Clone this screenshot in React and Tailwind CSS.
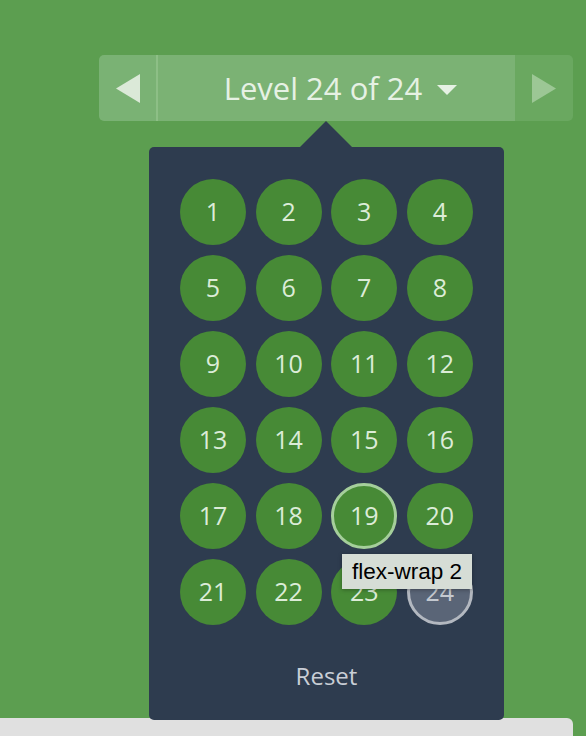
export default function App() {
  const nums = Array.from({ length: 24 }, (_, i) => i + 1);
  const font = { fontFamily: '"Open Sans", "Noto Sans", sans-serif' };
  return (
    <div className="relative min-h-[736px] overflow-hidden bg-[#5c9e50]" style={font}>
      <div className="pl-[99px] pt-[55px]">
        <div className="relative flex h-[66px] w-[474px]">
          <div className="flex w-[57px] items-center justify-center rounded-l-[5px] bg-[#7ab274]">
            <svg width="24" height="29" viewBox="0 0 24 29"><polygon points="24,0 24,29 0,14.5" fill="#dbe9d8" /></svg>
          </div>
          <div className="w-[2px] bg-[#8dbf86]" />
          <div className="flex flex-1 items-center justify-center gap-[15px] bg-[#7bb274] pl-[8px] text-[31px] text-[#e6f1e4]">
            <span className="leading-none">Level 24 of 24</span>
            <svg width="20" height="10" viewBox="0 0 20 10" className="mt-[4px]"><polygon points="0,0 20,0 10,10" fill="#e6f1e4" /></svg>
          </div>
          <div className="flex w-[58px] items-center justify-center rounded-r-[5px] bg-[#6aa860]">
            <svg width="24" height="29" viewBox="0 0 24 29"><polygon points="0,0 0,29 24,14.5" fill="#9cc795" /></svg>
          </div>

          <div className="absolute left-[50px] top-[66px] z-10">
            <div className="ml-[151px] h-0 w-0 border-x-[26px] border-b-[26px] border-x-transparent border-b-[#2e3c4f]" />
            <div className="relative h-[573px] w-[355px] rounded-[5px] bg-[#2e3c4f] pl-[31px] pt-[32px]">
              <div className="grid w-[293px] grid-cols-[66px_66px_66px_66px] gap-x-[9.6px] gap-y-[10px]">
                {nums.map((n) => {
                  let cls = "bg-[#478a36] text-[#dcecd8]";
                  if (n === 19) cls = "bg-[#478a36] text-[#dcecd8] border-[3px] border-[#a5cf9b]";
                  if (n === 24) cls = "bg-[#5a6577] text-[#c4c9d0] border-[3px] border-[#b3b8c0]";
                  return (
                    <div key={n} className={`flex h-[66px] w-[66px] items-center justify-center rounded-full text-[25px] ${cls}`}>
                      {n}
                    </div>
                  );
                })}
              </div>
              <div className="mr-[31px] mt-[34px] text-center text-[24px] leading-[34px] text-[#c9ced6]">Reset</div>
              <div className="absolute left-[193px] top-[407px] flex h-[35px] w-[130px] items-center justify-center bg-[#d6ddd6] text-[22.5px] text-black shadow-[0_1px_4px_rgba(0,0,0,0.3)]" style={{ fontFamily: '"Liberation Sans", Arial, sans-serif' }}>
                flex-wrap 2
              </div>
            </div>
          </div>
        </div>
      </div>
      <div className="mt-[597px] h-[30px] w-[573px] rounded-tr-[6px] bg-[#e0e0e0]" />
    </div>
  );
}
